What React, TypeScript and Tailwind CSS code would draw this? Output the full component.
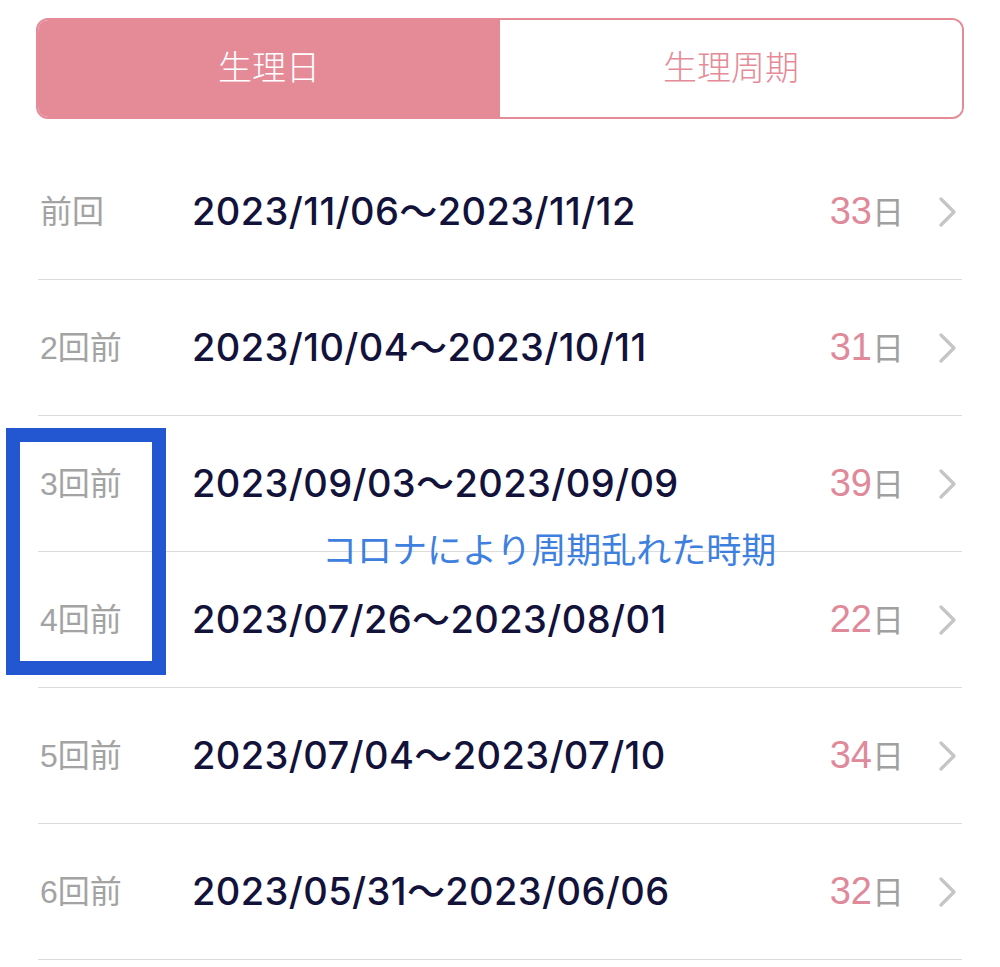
import React from "react";

const rows = [
  { label: "前回", range: "2023/11/06〜2023/11/12", days: "33" },
  { label: "2回前", range: "2023/10/04〜2023/10/11", days: "31" },
  { label: "3回前", range: "2023/09/03〜2023/09/09", days: "39" },
  { label: "4回前", range: "2023/07/26〜2023/08/01", days: "22" },
  { label: "5回前", range: "2023/07/04〜2023/07/10", days: "34" },
  { label: "6回前", range: "2023/05/31〜2023/06/06", days: "32" },
];

const jp = "font-['Liberation_Sans','Noto_Sans_CJK_JP',sans-serif]";

const Chevron = () => (
  <svg width="20" height="30" viewBox="0 0 20 30" className="ml-[34px] mr-[4px]">
    <polyline
      points="3,2 16,15 3,28"
      fill="none"
      stroke="#c5c5c8"
      strokeWidth="3.2"
      strokeLinecap="round"
      strokeLinejoin="round"
    />
  </svg>
);

const App = () => {
  return (
    <div className={`relative w-[1000px] h-[967px] bg-white overflow-hidden ${jp}`}>
      <div className="px-[36px] pt-[18px]">
        <div className="flex h-[101px] rounded-[12px] border-2 border-[#e58b98] overflow-hidden">
          <div className="flex-1 bg-[#e58b98] flex items-center justify-center text-white text-[34px] font-light">
            生理日
          </div>
          <div className="flex-1 bg-white flex items-center justify-center text-[#e58b98] text-[34px] font-light">
            生理周期
          </div>
        </div>
      </div>

      <div className="mx-[38px] mt-[25px]">
        {rows.map((r) => (
          <div key={r.label} className="flex items-center h-[136px] border-b-[1.5px] border-[#dcdcdc]">
            <div className="w-[154px] pl-[2px] text-[32px] text-[#a3a3a3]">{r.label}</div>
            <div className="flex-1 text-[38px] font-medium tracking-[0.4px] text-[#12123a] font-['Inter','Noto_Sans_CJK_JP',sans-serif]">
              {r.range}
            </div>
            <div className="flex items-baseline">
              <span className="text-[38px] text-[#e0899a]">{r.days}</span>
              <span className="text-[32px] text-[#a0a0a0]">日</span>
            </div>
            <Chevron />
          </div>
        ))}
      </div>

      <div className="absolute left-[322px] top-[533px] text-[35px] text-[#3d80e0] leading-none whitespace-nowrap">
        コロナにより周期乱れた時期
      </div>

      <div className="absolute left-[6px] top-[428px] w-[160px] h-[247px] border-[14px] border-[#2356d1]" />
    </div>
  );
};

export default App;
